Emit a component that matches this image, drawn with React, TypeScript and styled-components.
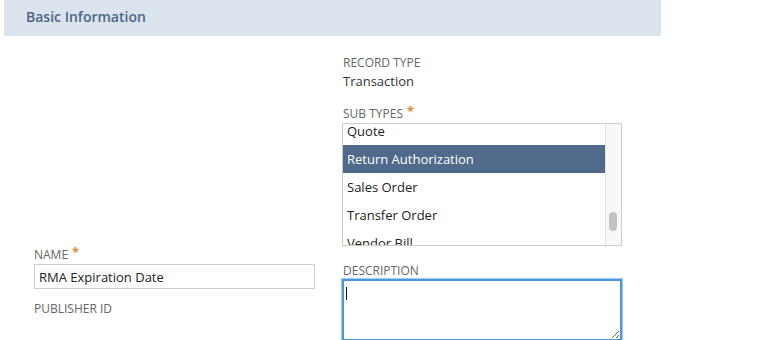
import React from "react";
import styled, { createGlobalStyle } from "styled-components";

const Global = createGlobalStyle`
  html, body { margin: 0; padding: 0; background: #ffffff; }
  body { font-family: "Open Sans", "Liberation Sans", Arial, sans-serif; color: #333; }
`;

const Page = styled.div`
  width: 783px;
  height: 340px;
  overflow: hidden;
`;

const SectionHeader = styled.div`
  margin-left: 4px;
  width: 657px;
  height: 36px;
  box-sizing: border-box;
  padding: 8px 0 0 22px;
  background: #dbe3ec;
  color: #4c6687;
  font-size: 14px;
  font-weight: 600;
  line-height: 18px;
`;

const Form = styled.div`
  display: grid;
  grid-template-columns: 281px 282px;
  column-gap: 28px;
  padding-left: 34px;
`;

const Column = styled.div<{ $top: number }>`
  display: flex;
  flex-direction: column;
  padding-top: ${(p) => p.$top}px;
`;

const Label = styled.div<{ $gap?: number; $mb?: number }>`
  font-size: 12px;
  line-height: 14px;
  height: 14px;
  color: #666;
  text-transform: uppercase;
  margin-top: ${(p) => p.$gap ?? 0}px;
  margin-bottom: ${(p) => p.$mb ?? 2}px;
  white-space: nowrap;
`;

const Req = styled.span`
  color: #e2892e;
  font-weight: 700;
  font-size: 13px;
  line-height: 0;
  margin-left: 4px;
  position: relative;
  top: -2px;
`;

const Value = styled.div`
  font-size: 13px;
  line-height: 16px;
  color: #333;
`;

const ListBox = styled.div`
  margin-left: -1px;
  width: 280px;
  height: 123px;
  box-sizing: border-box;
  border: 1px solid #cccccc;
  display: flex;
  overflow: hidden;
  background: #fff;
`;

const Viewport = styled.div`
  flex: 1;
  overflow: hidden;
`;

const OptionList = styled.div<{ $scroll: number }>`
  margin-top: ${(p) => -p.$scroll}px;
`;

const Option = styled.div<{ $selected?: boolean }>`
  height: 28px;
  line-height: 28px;
  padding-left: 4px;
  font-size: 13px;
  color: ${(p) => (p.$selected ? "#ffffff" : "#222")};
  background: ${(p) => (p.$selected ? "#4f6a8a" : "transparent")};
  white-space: nowrap;
`;

const Track = styled.div`
  width: 15px;
  border-left: 1px solid #e2e2e2;
  background: #f8f8f8;
  position: relative;
`;

const Thumb = styled.div`
  position: absolute;
  left: 3px;
  top: 88px;
  width: 8px;
  height: 19px;
  border-radius: 4px;
  background: #c2c2c2;
`;

const TextInput = styled.input`
  width: 281px;
  height: 25px;
  box-sizing: border-box;
  border: 1px solid #cccccc;
  padding: 0 0 0 4px;
  font-family: "Open Sans", "Liberation Sans", Arial, sans-serif;
  font-size: 13px;
  color: #222;
  outline: none;
  margin: 0;
`;

const AreaWrap = styled.div`
  position: relative;
  margin-left: -1px;
  width: 280px;
`;

const TextArea = styled.textarea`
  display: block;
  width: 280px;
  height: 62px;
  box-sizing: border-box;
  border: 2px solid #4a95dd;
  box-shadow: 0 0 1px 1px #a9d0f3;
  margin: 0;
  padding: 4px;
  font-family: "Open Sans", "Liberation Sans", Arial, sans-serif;
  font-size: 13px;
  outline: none;
  resize: both;
`;

const Caret = styled.span`
  position: absolute;
  left: 4px;
  top: 8px;
  width: 1px;
  height: 13px;
  background: #111;
`;

const subTypes = [
  "Quote",
  "Return Authorization",
  "Sales Order",
  "Transfer Order",
  "Vendor Bill",
];

export default function App() {
  return (
    <Page>
      <Global />
      <SectionHeader>Basic Information</SectionHeader>
      <Form>
        <Column $top={212}>
          <Label>
            Name<Req>*</Req>
          </Label>
          <TextInput defaultValue="RMA Expiration Date" />
          <Label $gap={13}>Publisher ID</Label>
        </Column>
        <Column $top={20}>
          <Label $mb={3}>Record Type</Label>
          <Value>Transaction</Value>
          <Label $gap={18}>
            Sub Types<Req>*</Req>
          </Label>
          <ListBox>
            <Viewport>
              <OptionList $scroll={7}>
                {subTypes.map((t) => (
                  <Option key={t} $selected={t === "Return Authorization"}>
                    {t}
                  </Option>
                ))}
              </OptionList>
            </Viewport>
            <Track>
              <Thumb />
            </Track>
          </ListBox>
          <Label $gap={18} $mb={1}>
            Description
          </Label>
          <AreaWrap>
            <TextArea />
            <Caret />
          </AreaWrap>
        </Column>
      </Form>
    </Page>
  );
}
